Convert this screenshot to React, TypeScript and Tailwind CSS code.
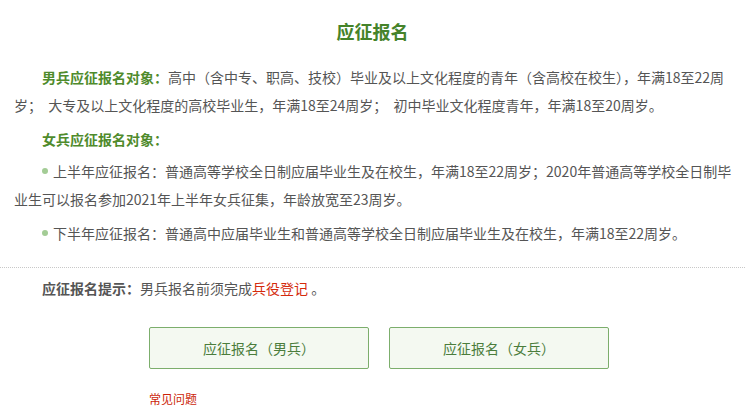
import React from "react";

const font = { fontFamily: '"Microsoft YaHei", "Noto Sans CJK SC", "Noto Sans", sans-serif' };

function Dot() {
  return <span className="inline-block w-[6px] h-[6px] rounded-full bg-[#a3cc95] mr-[5px] align-middle relative top-[-2px]" />;
}

export default function App() {
  return (
    <div className="w-[745px] h-[408px] bg-white overflow-hidden text-[14px] text-[#555]" style={font}>
      <div className="px-[14px]">
        <h1 className="pt-[20px] text-center text-[18px] leading-[22px] font-bold text-[#45832a]">应征报名</h1>
        <div className="mt-[21px] w-[717px] whitespace-nowrap">
          <p className="leading-[28px] indent-[28px] mb-[6px]">
            <span className="font-bold text-[#4f8b2c]">男兵应征报名对象：</span>高中（含中专、职高、技校）毕业及以上文化程度的青年（含高校在校生），年满18至22周<br />岁；&nbsp;&nbsp;大专及以上文化程度的高校毕业生，年满18至24周岁；&nbsp;&nbsp;初中毕业文化程度青年，年满18至20周岁。
          </p>
          <p className="leading-[28px] indent-[28px] mb-[4px]">
            <span className="font-bold text-[#4f8b2c]">女兵应征报名对象：</span>
          </p>
          <p className="leading-[28px] indent-[28px] mb-[6px]">
            <Dot />上半年应征报名：普通高等学校全日制应届毕业生及在校生，年满18至22周岁；2020年普通高等学校全日制毕<br />业生可以报名参加2021年上半年女兵征集，年龄放宽至23周岁。
          </p>
          <p className="leading-[28px] indent-[28px]">
            <Dot />下半年应征报名：普通高中应届毕业生和普通高等学校全日制应届毕业生及在校生，年满18至22周岁。
          </p>
        </div>
      </div>
      <div className="mt-[20px] border-t border-dotted border-[#c8c8c8]" />
      <div className="px-[14px]">
        <p className="pt-[6px] leading-[28px] indent-[28px]">
          <span className="font-bold">应征报名提示：</span>男兵报名前须完成<span className="text-[#d42a0c]">兵役登记</span> 。
        </p>
        <div className="mt-[25px] pl-[135px] flex gap-[20px]">
          <div className="w-[220px] h-[42px] border border-[#7cae6c] rounded-[2px] bg-[#f4f9f1] flex items-center justify-center text-[#4b7d3c]">应征报名（男兵）</div>
          <div className="w-[220px] h-[42px] border border-[#7cae6c] rounded-[2px] bg-[#f4f9f1] flex items-center justify-center text-[#4b7d3c]">应征报名（女兵）</div>
        </div>
        <div className="mt-[22px] pl-[135px] text-[12px] leading-[16px] text-[#cc1f0a]">常见问题</div>
      </div>
    </div>
  );
}
